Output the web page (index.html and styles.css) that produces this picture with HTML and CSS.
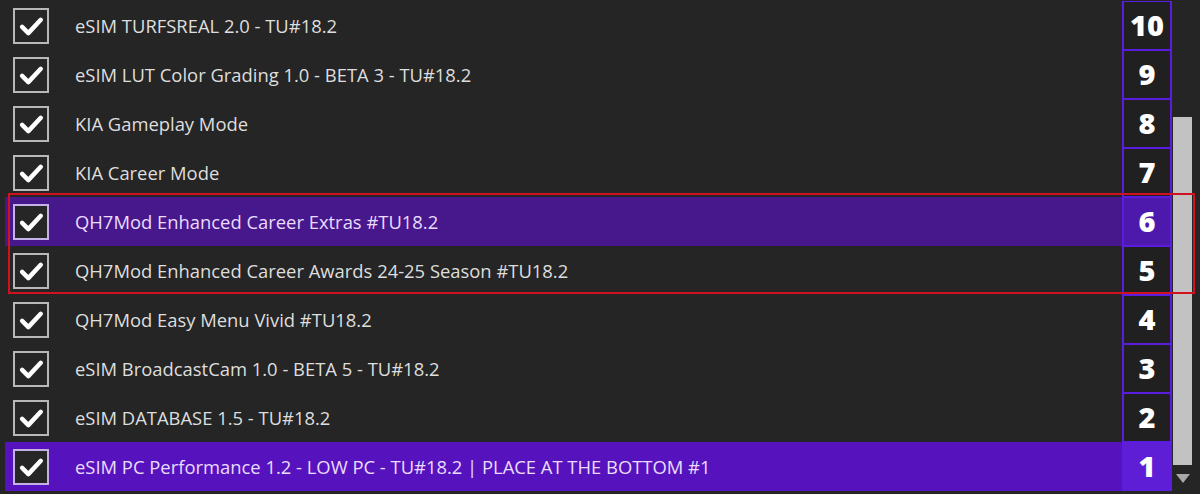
FILE: index.html
```html
<!DOCTYPE html>
<html lang="en">
<head>
    <meta charset="UTF-8">
    <title>Load Order</title>
    <link rel="stylesheet" href="styles.css">
</head>
<body>
    <div class="window">
        <div class="list">
            <div class="row">
                <div class="check"><svg viewBox="0 0 36 36"><path d="M8 19 L15 26 L29 11"/></svg></div>
                <div class="name">eSIM TURFSREAL 2.0 - TU#18.2</div>
                <div class="order">10</div>
            </div>
            <div class="row">
                <div class="check"><svg viewBox="0 0 36 36"><path d="M8 19 L15 26 L29 11"/></svg></div>
                <div class="name">eSIM LUT Color Grading 1.0 - BETA 3 - TU#18.2</div>
                <div class="order">9</div>
            </div>
            <div class="row">
                <div class="check"><svg viewBox="0 0 36 36"><path d="M8 19 L15 26 L29 11"/></svg></div>
                <div class="name">KIA Gameplay Mode</div>
                <div class="order">8</div>
            </div>
            <div class="row">
                <div class="check"><svg viewBox="0 0 36 36"><path d="M8 19 L15 26 L29 11"/></svg></div>
                <div class="name">KIA Career Mode</div>
                <div class="order">7</div>
            </div>
            <div class="row marked">
                <div class="check"><svg viewBox="0 0 36 36"><path d="M8 19 L15 26 L29 11"/></svg></div>
                <div class="name">QH7Mod Enhanced Career Extras #TU18.2</div>
                <div class="order">6</div>
            </div>
            <div class="row">
                <div class="check"><svg viewBox="0 0 36 36"><path d="M8 19 L15 26 L29 11"/></svg></div>
                <div class="name">QH7Mod Enhanced Career Awards 24-25 Season #TU18.2</div>
                <div class="order">5</div>
            </div>
            <div class="row">
                <div class="check"><svg viewBox="0 0 36 36"><path d="M8 19 L15 26 L29 11"/></svg></div>
                <div class="name">QH7Mod Easy Menu Vivid #TU18.2</div>
                <div class="order">4</div>
            </div>
            <div class="row">
                <div class="check"><svg viewBox="0 0 36 36"><path d="M8 19 L15 26 L29 11"/></svg></div>
                <div class="name">eSIM BroadcastCam 1.0 - BETA 5 - TU#18.2</div>
                <div class="order">3</div>
            </div>
            <div class="row">
                <div class="check"><svg viewBox="0 0 36 36"><path d="M8 19 L15 26 L29 11"/></svg></div>
                <div class="name">eSIM DATABASE 1.5 - TU#18.2</div>
                <div class="order">2</div>
            </div>
            <div class="row active">
                <div class="check"><svg viewBox="0 0 36 36"><path d="M8 19 L15 26 L29 11"/></svg></div>
                <div class="name">eSIM PC Performance 1.2 - LOW PC - TU#18.2 | PLACE AT THE BOTTOM #1</div>
                <div class="order">1</div>
            </div>
        </div>

        <div class="scrollbar">
            <div class="thumb"></div>
            <div class="arrow"></div>
        </div>

        <!-- annotation box over rows 6 and 5 -->
        <div class="highlight"></div>
    </div>
</body>
</html>
```

FILE: styles.css
```css
body {
    margin: 0;
    background: #252525;
    font-family: "Open Sans", "Noto Sans", sans-serif;
    overflow: hidden;
}
.window {
    position: relative;
    display: flex;
    height: 494px;
    padding-top: 1px;
    box-sizing: border-box;
}
.list {
    margin-left: 5px;
    width: 1167px;
}
.row {
    display: flex;
    align-items: center;
    height: 49px;
    color: #dedede;
}
.row.marked {
    background: #47178c;
    color: #eadcff;
}
.row.active {
    background: #5613bd;
    color: #eadcff;
}
.check {
    width: 36px;
    height: 36px;
    margin-left: 8px;
    box-sizing: border-box;
    border: 2px solid #b8b8b8;
    background: #262626;
}
.row.marked .check,
.row.active .check {
    border-color: #c4b2e6;
}
.check svg {
    display: block;
    width: 32px;
    height: 32px;
}
.check path {
    fill: none;
    stroke: #fff;
    stroke-width: 5;
    stroke-linecap: round;
    stroke-linejoin: round;
}
.name {
    flex: 1;
    margin-left: 26px;
    font-size: 18.4px;
    white-space: nowrap;
}
.order {
    width: 50px;
    height: 49px;
    box-sizing: border-box;
    border: 2px solid #5a1de0;
    border-top-width: 1px;
    border-bottom-width: 1px;
    background: #202020;
    color: #fff;
    font-weight: 800;
    font-size: 29px;
    line-height: 45px;
    text-align: center;
}
.row.marked .order {
    background: #4d19ac;
}
.row.active .order {
    background: #5e1ed6;
}
.scrollbar {
    width: 19px;
    margin-left: 1px;
    display: flex;
    flex-direction: column;
    align-items: center;
}
.thumb {
    width: 19px;
    height: 348px;
    margin-top: 116px;
    background: #c2c2c2;
}
.arrow {
    margin-top: 9px;
    width: 0;
    height: 0;
    border-left: 7px solid transparent;
    border-right: 7px solid transparent;
    border-top: 9px solid #a8a8a8;
}
.highlight {
    position: absolute;
    left: 8px;
    top: 193px;
    width: 1187px;
    height: 101px;
    box-sizing: border-box;
    border: 2px solid #d0111f;
}
```
